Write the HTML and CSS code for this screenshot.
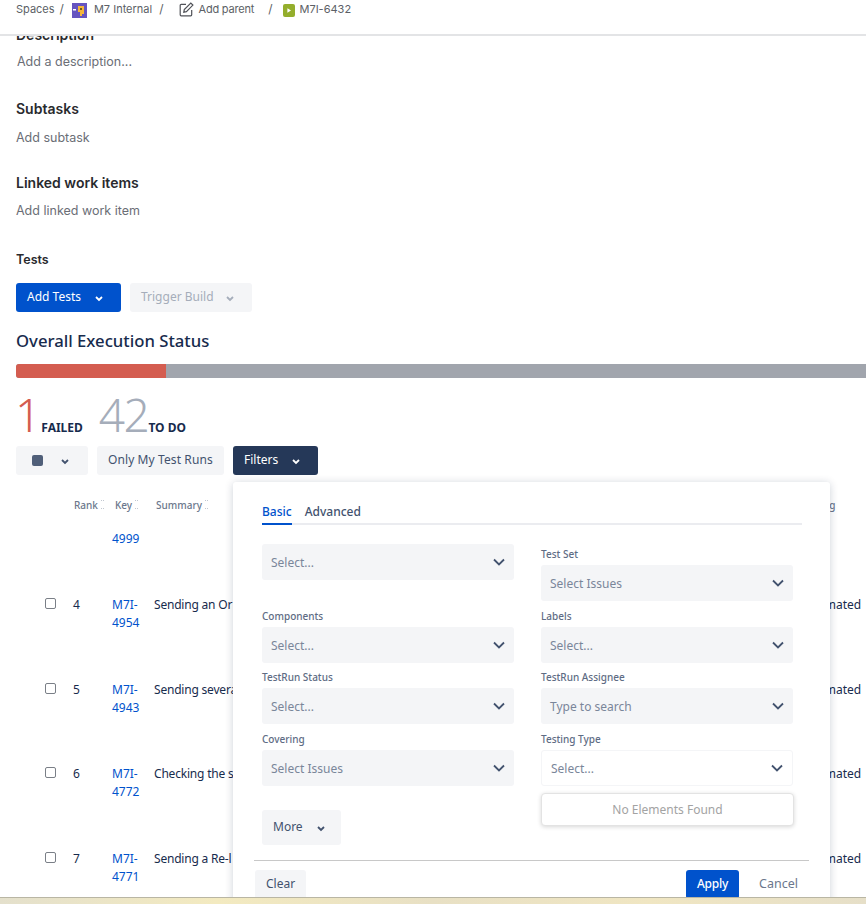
FILE: index.html
```html
<!DOCTYPE html>
<html lang="en">
<head>
    <meta charset="UTF-8">
    <title>M7I-6432</title>
    <link rel="stylesheet" href="styles.css">
</head>
<body>
    <div class="page">
        <h2 class="desc-title">Description</h2>
        <div class="muted desc-text">Add a description...</div>
        <h2 class="sub-title">Subtasks</h2>
        <div class="muted sub-text">Add subtask</div>
        <h2 class="linked-title">Linked work items</h2>
        <div class="muted linked-text">Add linked work item</div>

        <h3 class="tests-title">Tests</h3>
        <div class="test-actions">
            <button class="btn btn-primary add-tests">Add Tests <svg class="chev" viewBox="0 0 10 10"><path d="M2 4l3 3 3-3"/></svg></button>
            <button class="btn btn-disabled trigger">Trigger Build <svg class="chev" viewBox="0 0 10 10"><path d="M2 4l3 3 3-3"/></svg></button>
        </div>

        <h2 class="status-title">Overall Execution Status</h2>
        <div class="status-bar">
            <div class="bar-failed"></div>
        </div>
        <div class="counts">
            <span class="count count-failed">1</span>
            <span class="count-label">FAILED</span>
            <span class="count count-todo">42</span>
            <span class="count-label">TO DO</span>
        </div>

        <div class="toolbar">
            <button class="btn btn-plain stop-btn"><span class="stop"></span><svg class="chev" viewBox="0 0 10 10"><path d="M2 4l3 3 3-3"/></svg></button>
            <button class="btn btn-plain only-mine">Only My Test Runs</button>
            <button class="btn btn-dark filters-btn">Filters <svg class="chev" viewBox="0 0 10 10"><path d="M2 4l3 3 3-3"/></svg></button>
        </div>

        <div class="table-head">
            <span class="th th-rank">Rank <i class="sort"></i></span>
            <span class="th th-key">Key <i class="sort"></i></span>
            <span class="th th-summary">Summary <i class="sort"></i></span>
            <span class="th th-last">Testing</span>
        </div>
        <div class="table-row partial">
            <span class="cell-key"><a>4999</a></span>
        </div>
        <div class="table-row">
            <span class="box"></span><span class="cell-rank">4</span>
            <span class="cell-key"><a>M7I-<br>4954</a></span>
            <span class="cell-summary">Sending an Or</span>
            <span class="cell-type">Automated</span>
        </div>
        <div class="table-row">
            <span class="box"></span><span class="cell-rank">5</span>
            <span class="cell-key"><a>M7I-<br>4943</a></span>
            <span class="cell-summary">Sending severa</span>
            <span class="cell-type">Automated</span>
        </div>
        <div class="table-row">
            <span class="box"></span><span class="cell-rank">6</span>
            <span class="cell-key"><a>M7I-<br>4772</a></span>
            <span class="cell-summary">Checking the s</span>
            <span class="cell-type">Automated</span>
        </div>
        <div class="table-row">
            <span class="box"></span><span class="cell-rank">7</span>
            <span class="cell-key"><a>M7I-<br>4771</a></span>
            <span class="cell-summary">Sending a Re-l</span>
            <span class="cell-type">Automated</span>
        </div>
    </div>

    <div class="topbar">
        <span class="crumb">Spaces</span>
        <span class="slash first">/</span>
        <svg class="space-icon" width="15" height="15" viewBox="0 0 15 15">
            <rect width="15" height="15" fill="#6554c0"/>
            <rect x="1" y="6" width="3" height="1.5" fill="#fff"/>
            <path d="M6 3h6v8h-2v2H8V9H6z" fill="#f5b63a"/>
            <rect x="8" y="5" width="2" height="2" fill="#6b5a20"/>
        </svg>
        <span class="crumb space-name">M7 Internal</span>
        <span class="slash">/</span>
        <svg class="edit-icon" width="15" height="15" viewBox="0 0 15 15" fill="none" stroke="#505258" stroke-width="1.2">
            <path d="M7 2.3H2.2a1 1 0 0 0-1 1v9.5a1 1 0 0 0 1 1h9.5a1 1 0 0 0 1-1V8"/>
            <path d="M4.8 10.2l.5-2.6L11.8 1l2.1 2.1-6.5 6.6z"/>
        </svg>
        <span class="crumb parent">Add parent</span>
        <span class="slash far">/</span>
        <svg class="test-icon" width="12" height="13" viewBox="0 0 12 13">
            <rect width="12" height="13" rx="2" fill="#94ae2c"/>
            <path d="M4.4 4.3L8 6.5L4.4 8.7z" fill="#fff"/>
        </svg>
        <span class="crumb">M7I-6432</span>
    </div>

    <div class="filters">
        <div class="tabs">
            <span class="tab active">Basic</span>
            <span class="tab">Advanced</span>
        </div>
        <div class="filter-grid">
            <div class="field">
                <div class="select"><span>Select...</span><svg class="select-chev" viewBox="0 0 12 8"><path d="M1 1.5L6 6.5l5-5"/></svg></div>
            </div>
            <div class="field field-shifted">
                <label>Test Set</label>
                <div class="select"><span>Select Issues</span><svg class="select-chev" viewBox="0 0 12 8"><path d="M1 1.5L6 6.5l5-5"/></svg></div>
            </div>
            <div class="field">
                <label>Components</label>
                <div class="select"><span>Select...</span><svg class="select-chev" viewBox="0 0 12 8"><path d="M1 1.5L6 6.5l5-5"/></svg></div>
            </div>
            <div class="field">
                <label>Labels</label>
                <div class="select"><span>Select...</span><svg class="select-chev" viewBox="0 0 12 8"><path d="M1 1.5L6 6.5l5-5"/></svg></div>
            </div>
            <div class="field">
                <label>TestRun Status</label>
                <div class="select"><span>Select...</span><svg class="select-chev" viewBox="0 0 12 8"><path d="M1 1.5L6 6.5l5-5"/></svg></div>
            </div>
            <div class="field">
                <label>TestRun Assignee</label>
                <div class="select"><span>Type to search</span><svg class="select-chev" viewBox="0 0 12 8"><path d="M1 1.5L6 6.5l5-5"/></svg></div>
            </div>
            <div class="field">
                <label>Covering</label>
                <div class="select"><span>Select Issues</span><svg class="select-chev" viewBox="0 0 12 8"><path d="M1 1.5L6 6.5l5-5"/></svg></div>
            </div>
            <div class="field">
                <label>Testing Type</label>
                <div class="select select-open"><span>Select...</span><svg class="select-chev" viewBox="0 0 12 8"><path d="M1 1.5L6 6.5l5-5"/></svg></div>
                <div class="no-elements">No Elements Found</div>
            </div>
        </div>
        <button class="btn btn-plain more-btn">More <svg class="chev" viewBox="0 0 10 10"><path d="M2 4l3 3 3-3"/></svg></button>
        <div class="filter-footer">
            <button class="btn btn-plain clear-btn">Clear</button>
            <button class="btn btn-primary apply-btn">Apply</button>
            <button class="btn btn-link">Cancel</button>
        </div>
    </div>

    <div class="taskbar"></div>
</body>
</html>
```

FILE: styles.css
```css
html, body {
    margin: 0;
    height: 904px;
    overflow: hidden;
}
body {
    position: relative;
    background: #fff;
    color: #172b4d;
    font-family: 'Noto Sans', sans-serif;
    font-size: 12px;
}

/* top breadcrumb */
.topbar {
    position: absolute;
    top: 0;
    left: 0;
    right: 0;
    height: 34px;
    padding: 0 0 0 16px;
    display: flex;
    align-items: flex-start;
    background: #fff;
    font-family: 'Inter', sans-serif;
    font-size: 11px;
    color: #5c5f66;
    border-bottom: 2px solid #e3e4e6;
    box-sizing: content-box;
    line-height: 18px;
}
.crumb {
    white-space: nowrap;
}
.slash {
    margin-left: 8px;
    font-size: 12px;
}
.slash.first {
    margin-left: 5px;
    margin-right: 8px;
}
.space-icon {
    margin-top: 3px;
    margin-right: 7px;
}
.space-name {
    margin-right: -1px;
}
.edit-icon {
    margin-top: 2px;
    margin-left: 15px;
    margin-right: 5px;
}
.parent {
    letter-spacing: -0.2px;
}
.slash.far {
    margin-left: 14px;
    margin-right: 10px;
}
.test-icon {
    margin-top: 4px;
    margin-right: 5px;
}

/* page content */
.page {
    padding: 0 0 0 16px;
    font-family: 'Inter', sans-serif;
}
h2, h3 {
    margin: 0;
    color: #292a2e;
    font-weight: 600;
}
.desc-title, .sub-title, .linked-title {
    font-size: 14px;
    line-height: 20px;
}
.desc-title {
    padding-top: 25px;
}
.muted {
    font-size: 12.5px;
    line-height: 18px;
    color: #6b6e76;
}
.desc-text {
    margin-top: 8px;
    margin-left: 1px;
}
.sub-title {
    margin-top: 28px;
}
.sub-text {
    margin-top: 10px;
}
.linked-title {
    margin-top: 26px;
}
.linked-text {
    margin-top: 9px;
}
.tests-title {
    margin-top: 31px;
    font-size: 12.5px;
    line-height: 18px;
}

.btn {
    border: none;
    border-radius: 3px;
    height: 29px;
    padding: 0 11px 2px;
    font-family: 'Noto Sans', sans-serif;
    font-size: 12px;
    display: inline-flex;
    align-items: center;
    box-sizing: border-box;
}
.chev {
    width: 10px;
    height: 10px;
    margin-top: 2px;
    fill: none;
    stroke: currentColor;
    stroke-width: 1.8;
}
.btn-primary {
    background: #0052cc;
    color: #fff;
}
.btn-disabled {
    background: #f4f5f7;
    color: #a5adba;
}
.btn-plain {
    background: #f4f5f7;
    color: #42526e;
}
.btn-dark {
    background: #253858;
    color: #fff;
}
.btn-link {
    background: none;
    color: #6b778c;
}
.test-actions {
    display: flex;
    gap: 9px;
    margin-top: 14px;
}
.add-tests {
    width: 105px;
}
.add-tests .chev {
    margin-left: 13px;
}
.trigger {
    width: 122px;
}
.trigger .chev {
    margin-left: 11px;
}

.status-title {
    margin-top: 17px;
    font-family: 'Noto Sans', sans-serif;
    font-size: 16.7px;
    line-height: 24px;
    font-weight: 500;
    color: #172b4d;
}
.status-bar {
    margin-top: 11px;
    height: 14px;
    background: #a1a5ad;
    border-radius: 3px 0 0 3px;
    overflow: hidden;
}
.bar-failed {
    width: 150px;
    height: 100%;
    background: #d45d50;
}
.counts {
    display: flex;
    align-items: baseline;
    height: 47px;
    margin-top: 13px;
    font-family: 'Noto Sans', sans-serif;
}
.count {
    font-size: 46px;
    line-height: 47px;
    font-weight: 300;
}
.count-failed {
    color: #d45d50;
    margin-left: -1px;
}
.count-todo {
    color: #a5adba;
    margin-left: 16px;
    letter-spacing: -1.5px;
}
.count-label {
    font-size: 12px;
    font-weight: 700;
    color: #172b4d;
}
.toolbar {
    display: flex;
    gap: 9px;
    margin-top: 8px;
}
.stop-btn {
    width: 72px;
    padding-left: 16px;
    padding-bottom: 0;
}
.stop {
    width: 11px;
    height: 11px;
    border-radius: 2px;
    background: #505f79;
    margin-right: 17px;
}
.stop-btn .chev {
    margin-top: 0;
}
.only-mine {
    width: 127px;
    letter-spacing: 0.1px;
}
.filters-btn {
    width: 85px;
}
.filters-btn .chev {
    margin-left: 13px;
}

/* table behind the filter panel */
.table-head {
    display: flex;
    margin-top: 23px;
    font-family: 'Noto Sans', sans-serif;
    font-size: 10px;
    line-height: 14px;
    color: #6b778c;
    font-weight: 500;
    position: relative;
}
.th-rank {
    margin-left: 58px;
    width: 41px;
}
.th-key {
    width: 41px;
}
.th-summary {
    flex: 1;
}
.th-last {
    position: absolute;
    left: 785px;
}
.sort {
    display: inline-block;
    width: 3px;
    height: 7px;
    border-top: 1px dotted #c1c7d0;
    border-bottom: 1px dotted #c1c7d0;
}
.table-row {
    display: flex;
    height: 84.5px;
    font-family: 'Noto Sans', sans-serif;
    font-size: 12px;
    line-height: 18px;
    color: #172b4d;
    white-space: nowrap;
}
.table-row.partial {
    height: 66px;
    margin-top: 18px;
    padding-left: 96px;
}
.box {
    width: 11px;
    height: 11px;
    margin: 2px 0 0 29px;
    border: 1px solid #7a7f87;
    border-radius: 2px;
    background: #fff;
    box-sizing: border-box;
}
.cell-rank {
    width: 39px;
    margin-left: 17px;
}
.cell-key {
    width: 42px;
}
.cell-key a {
    color: #0052cc;
}
.cell-summary {
    width: 79px;
    letter-spacing: -0.2px;
}
.cell-type {
    margin-left: 565px;
}

/* filter panel */
.filters {
    position: absolute;
    left: 233px;
    top: 482px;
    width: 597px;
    height: 440px;
    background: #fff;
    border-radius: 3px;
    box-shadow: 0 1px 8px rgba(9, 30, 66, 0.2);
    box-sizing: border-box;
    padding: 0 0 0 29px;
}
.tabs {
    display: flex;
    gap: 13px;
    width: 540px;
    height: 43px;
    box-sizing: border-box;
    border-bottom: 2px solid #ebecf0;
    align-items: flex-end;
    font-size: 12px;
    color: #42526e;
    font-weight: 500;
}
.tab {
    padding-bottom: 2px;
    line-height: 18px;
    margin-bottom: -2px;
    border-bottom: 2px solid transparent;
}
.tab.active {
    color: #0052cc;
    border-bottom-color: #0052cc;
}
.filter-grid {
    display: grid;
    grid-template-columns: 252px 252px;
    column-gap: 27px;
    grid-template-rows: 65px 61px 62px 78px;
    width: 532px;
    margin-top: 19px;
}
.field-shifted {
    padding-top: 3px;
}
.field label {
    display: block;
    font-size: 10px;
    line-height: 14px;
    height: 18px;
    color: #5e6c84;
    font-weight: 500;
}
.select {
    height: 36px;
    padding: 0 9px;
    display: flex;
    align-items: center;
    justify-content: space-between;
    background: #f4f5f7;
    border-radius: 3px;
    box-sizing: border-box;
    font-size: 12px;
    color: #7a869a;
}
.select-chev {
    width: 12px;
    height: 8px;
    fill: none;
    stroke: #42526e;
    stroke-width: 1.8;
}
.select-open {
    background: #fff;
    border: 1px solid #f4f5f7;
}
.no-elements {
    position: absolute;
    width: 253px;
    height: 33px;
    margin-top: 7px;
    line-height: 31px;
    text-align: center;
    font-size: 12px;
    color: #a3a3a3;
    background: #fff;
    border: 1px solid #e3e3e3;
    border-radius: 4px;
    box-shadow: 0 1px 4px rgba(0, 0, 0, 0.16);
    box-sizing: border-box;
}
.more-btn {
    width: 79px;
    height: 35px;
}
.more-btn .chev {
    margin-left: 13px;
}
.filter-footer {
    display: flex;
    align-items: flex-start;
    margin: 15px 0 0 -8px;
    width: 555px;
    padding-top: 9px;
    border-top: 1px solid #c8c8c8;
}
.clear-btn {
    width: 51px;
    margin-left: 1px;
}
.apply-btn {
    width: 53px;
    margin-left: auto;
    justify-content: center;
    font-weight: 500;
    letter-spacing: -0.2px;
}
.btn-link {
    margin-left: 9px;
    font-size: 12.5px;
}

.taskbar {
    position: absolute;
    left: 0;
    right: 0;
    top: 897px;
    height: 7px;
    border-top: 1px solid #b9b6a4;
    box-sizing: border-box;
    background: linear-gradient(90deg, #e4e0cc, #f3eac0 25%, #e8e0c4 50%, #f0e6c2 75%, #e6dfc8);
}
```
